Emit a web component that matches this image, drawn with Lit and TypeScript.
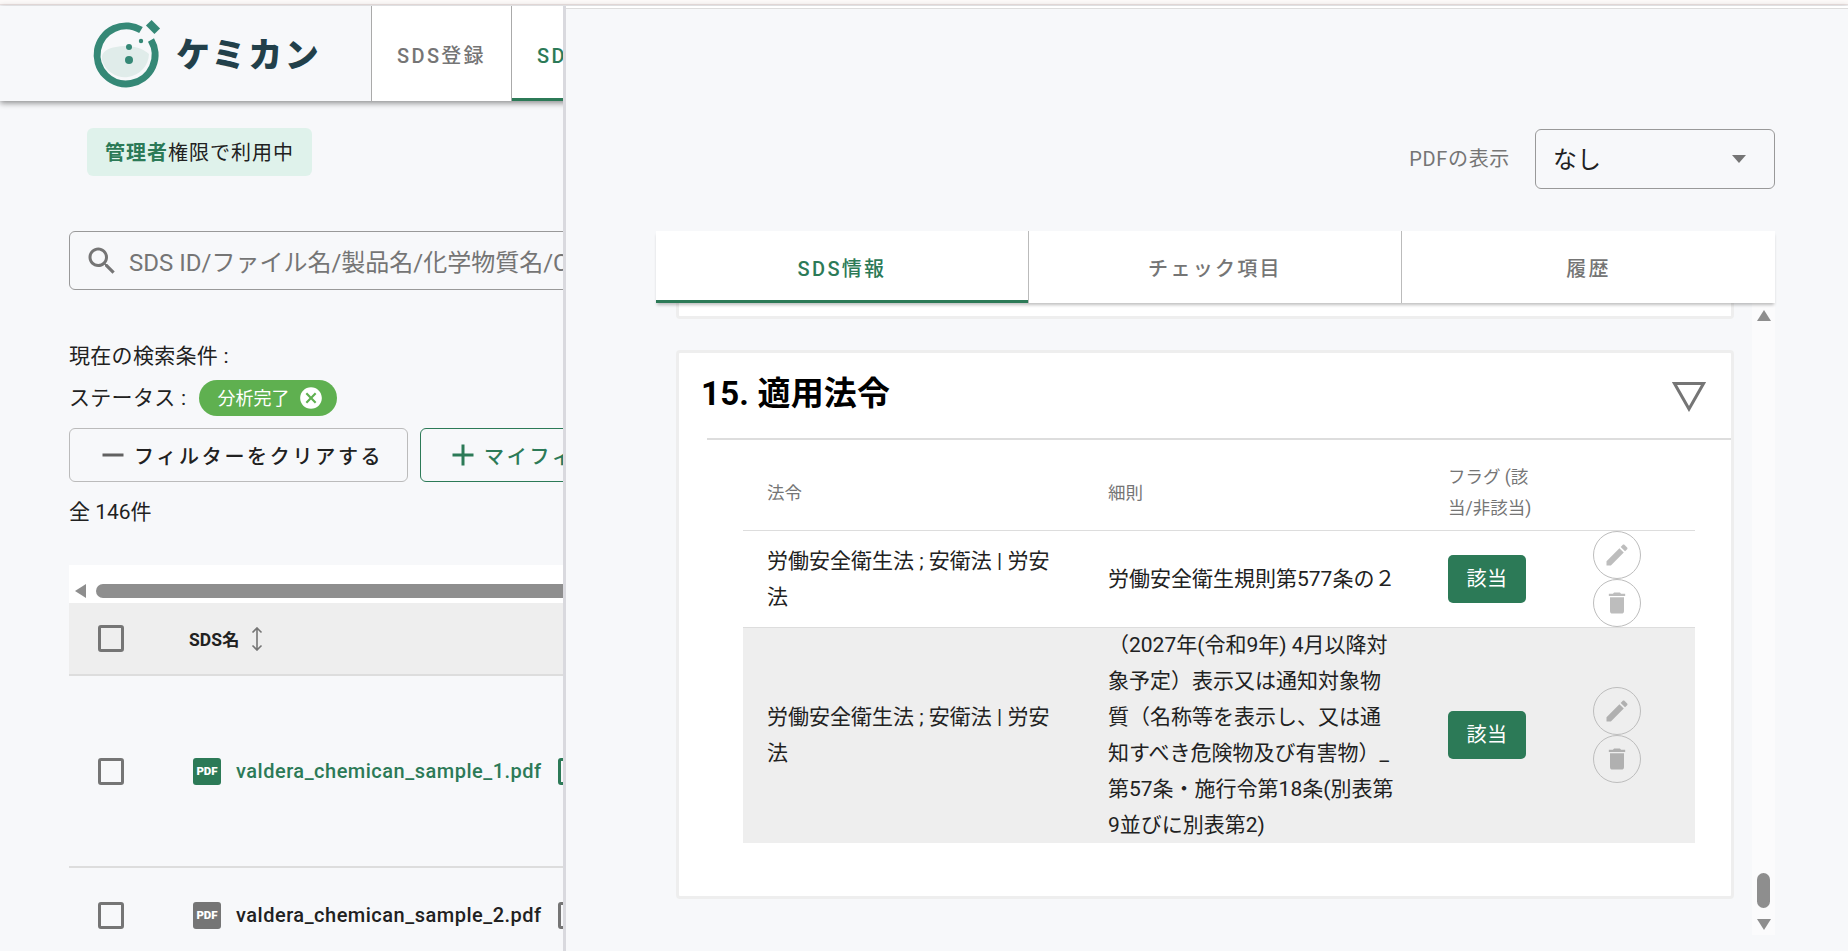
import { LitElement, html, css, svg } from 'lit';
import { customElement } from 'lit/decorators.js';

const icon = (d: string, size: number, cls = '') => html`
  <svg class=${cls} width=${size} height=${size} viewBox="0 0 24 24" fill="currentColor">
    ${svg`<path d=${d}></path>`}
  </svg>
`;

const SEARCH =
  'M15.5 14h-.79l-.28-.27C15.41 12.59 16 11.11 16 9.5 16 5.91 13.09 3 9.5 3S3 5.91 3 9.5 5.91 16 9.5 16c1.61 0 3.09-.59 4.23-1.57l.27.28v.79l5 4.99L20.49 19l-4.99-5zm-6 0C7.01 14 5 11.99 5 9.5S7.01 5 9.5 5 14 7.01 14 9.5 11.99 14 9.5 14z';
const MINUS = 'M19 13H5v-2h14v2z';
const PLUS = 'M19 13h-6v6h-2v-6H5v-2h6V5h2v6h6v2z';
const CANCEL =
  'M12 2C6.47 2 2 6.47 2 12s4.47 10 10 10 10-4.47 10-10S17.53 2 12 2zm5 13.59L15.59 17 12 13.41 8.41 17 7 15.59 10.59 12 7 8.41 8.41 7 12 10.59 15.59 7 17 8.41 13.41 12 17 15.59z';
const EDIT =
  'M3 17.25V21h3.75L17.81 9.94l-3.75-3.75L3 17.25zM20.71 7.04c.39-.39.39-1.02 0-1.41l-2.34-2.34c-.39-.39-1.02-.39-1.41 0l-1.83 1.83 3.75 3.75 1.83-1.83z';
const TRASH = 'M6 19c0 1.1.9 2 2 2h8c1.1 0 2-.9 2-2V7H6v12zM19 4h-3.5l-1-1h-5l-1 1H5v2h14V4z';

@customElement('app-root')
export class AppRoot extends LitElement {
  static styles = css`
    :host {
      display: block;
      width: 1848px;
      height: 951px;
      position: relative;
      overflow: hidden;
      background: #f7f8fa;
      color: #212121;
      font-family: Roboto, 'Noto Sans CJK JP', sans-serif;
      font-size: 20px;
    }

    .topline {
      height: 4px;
      background: #fcf9f8;
      border-bottom: 1px solid #eee4e3;
      margin-bottom: 1px;
    }

    /* header */
    .header {
      height: 95px;
      display: flex;
      box-shadow: 0 2px 6px rgba(0, 0, 0, 0.45);
      position: relative;
    }
    .logo {
      width: 372px;
      box-sizing: border-box;
      display: flex;
      align-items: center;
      padding-left: 88px;
      gap: 8px;
      border-right: 1px solid #aaa;
    }
    .logo-text {
      font-family: 'Noto Sans CJK JP', sans-serif;
      font-weight: 900;
      font-size: 34px;
      letter-spacing: 2.6px;
      color: #22404a;
      line-height: 1;
      margin-bottom: 2px;
    }
    .nav {
      display: flex;
    }
    .nav-item {
      width: 140px;
      box-sizing: border-box;
      display: flex;
      align-items: center;
      justify-content: center;
      background: #fff;
      border-right: 1px solid #aaa;
      color: #757575;
      font-weight: 500;
      letter-spacing: 2.3px;
      font-size: 20px;
      padding-top: 2px;
    }
    .nav-item.active {
      color: #2c7a57;
      box-shadow: inset 0 -3px 0 #2c7a57;
    }

    /* page under the header */
    .main {
      padding-left: 69px;
    }
    .role {
      margin: 27px 0 0 18px;
      width: 225px;
      height: 48px;
      box-sizing: border-box;
      display: flex;
      align-items: center;
      justify-content: center;
      background: #dff2eb;
      border-radius: 6px;
      font-size: 20px;
      letter-spacing: 1px;
      padding-bottom: 2px;
    }
    .role b {
      color: #2c7a57;
      font-weight: 700;
    }
    .search {
      margin-top: 55px;
      width: 800px;
      height: 59px;
      box-sizing: border-box;
      border: 1px solid #999;
      border-radius: 6px;
      display: flex;
      align-items: center;
      padding-left: 14px;
      gap: 9px;
      color: #757575;
      font-size: 24px;
      white-space: nowrap;
    }
    .cond {
      margin-top: 52px;
      line-height: 28px;
      font-size: 21px;
      letter-spacing: 0.3px;
    }
    .status {
      margin-top: 10px;
      height: 36px;
      display: flex;
      align-items: center;
      gap: 13px;
      font-size: 21px;
      letter-spacing: 0.3px;
    }
    .status-label {
      margin-bottom: 4px;
    }
    .chip {
      width: 138px;
      height: 36px;
      box-sizing: border-box;
      display: flex;
      align-items: center;
      padding: 0 0 0 18px;
      gap: 9px;
      border-radius: 18px;
      background: #5fb050;
      color: #fff;
      font-size: 18px;
      letter-spacing: 0;
      white-space: nowrap;
    }
    .chip span {
      margin-bottom: 2px;
    }
    .buttons {
      margin-top: 12px;
      display: flex;
      gap: 12px;
    }
    .btn {
      height: 54px;
      box-sizing: border-box;
      display: flex;
      align-items: center;
      justify-content: flex-start;
      padding-left: 25px;
      gap: 3px;
      border: 1px solid #bbb;
      border-radius: 6px;
      font-size: 20px;
      letter-spacing: 2.7px;
      font-weight: 500;
      white-space: nowrap;
    }
    .btn svg {
      color: #616161;
    }
    .btn.clear {
      width: 339px;
    }
    .btn.add {
      width: 400px;
      padding-left: 24px;
      border-color: #2c7a57;
      color: #2c7a57;
    }
    .btn.add svg {
      color: #2c7a57;
    }
    .total {
      margin-top: 16px;
      line-height: 28px;
      font-size: 21px;
    }

    /* list table */
    .list {
      margin-top: 39px;
      width: 1700px;
    }
    .hscroll {
      height: 38px;
      background: #fff;
      display: flex;
      align-items: flex-end;
      padding: 0 0 5px 6px;
      box-sizing: border-box;
      gap: 10px;
    }
    .hscroll .arrow {
      width: 0;
      height: 0;
      border-style: solid;
      border-width: 7px 11px 7px 0;
      border-color: transparent #8e8e8e transparent transparent;
    }
    .hscroll .thumb {
      flex: 1;
      height: 14px;
      border-radius: 7px;
      background: #8e8e8e;
    }
    .list-head,
    .list-row {
      display: flex;
      align-items: center;
      border-bottom: 2px solid #ddd;
    }
    .list-head {
      height: 73px;
      box-sizing: border-box;
      background: #eee;
    }
    .list-row {
      height: 192px;
      box-sizing: border-box;
    }
    .list-row.short {
      height: 96px;
    }
    .box {
      width: 26px;
      height: 27px;
      box-sizing: border-box;
      margin-left: 29px;
      border: 3px solid #757575;
      border-radius: 3px;
    }
    .sort-name {
      margin-left: 65px;
      font-size: 17.5px;
      font-weight: 700;
      display: flex;
      align-items: center;
      gap: 12px;
      color: #212121;
    }
    .pdf {
      margin-left: 69px;
      width: 28px;
      height: 27px;
      border-radius: 3px;
      background: #2c7a57;
      color: #fff;
      font-size: 11.5px;
      font-weight: 900;
      display: flex;
      align-items: center;
      justify-content: center;
    }
    .pdf.gray {
      background: #757575;
    }
    .fname {
      margin-left: 15px;
      width: 307px;
      font-size: 20px;
      font-weight: 500;
      letter-spacing: 0.5px;
      white-space: nowrap;
    }
    .fname.link {
      color: #2c7a57;
    }
    .tag {
      margin-left: 15px;
      width: 60px;
      height: 27px;
      box-sizing: border-box;
      border: 3px solid #2c7a57;
      border-radius: 3px;
    }
    .tag.gray {
      border-color: #757575;
    }

    /* drawer over the page */
    .panel {
      position: absolute;
      left: 563px;
      right: 0;
      top: 6px;
      bottom: 0;
      box-sizing: border-box;
      background: #f7f8fa;
      border-left: 3px solid #d9d9de;
      display: flex;
      flex-direction: column;
      padding-bottom: 16px;
    }
    .panel-top {
      height: 2px;
      background: #fff;
      border-bottom: 1px solid #ddd;
    }
    .pdf-row {
      margin: 120px 73px 0 0;
      height: 60px;
      display: flex;
      justify-content: flex-end;
      align-items: center;
      gap: 25px;
    }
    .pdf-label {
      color: #757575;
      font-size: 20px;
      letter-spacing: 0.65px;
      margin-bottom: 3px;
    }
    .select {
      width: 240px;
      height: 60px;
      box-sizing: border-box;
      border: 1px solid #999;
      border-radius: 6px;
      display: flex;
      align-items: center;
      justify-content: space-between;
      padding: 0 28px 0 17px;
      font-size: 24px;
    }
    .select span:first-child {
      margin-bottom: 3px;
    }
    .caret {
      width: 0;
      height: 0;
      border-style: solid;
      border-width: 8px 7.5px 0 7.5px;
      border-color: #757575 transparent transparent transparent;
    }
    .drawer-body {
      flex: 1;
      min-height: 0;
      margin: 42px 73px 0 90px;
      display: flex;
      flex-direction: column;
    }
    .tabs {
      height: 72px;
      flex: none;
      display: grid;
      grid-template-columns: 373px 373px 1fr;
      background: #fff;
      box-shadow: 0 3px 3px -1px rgba(0, 0, 0, 0.25);
      position: relative;
      z-index: 1;
    }
    .tab {
      box-sizing: border-box;
      display: flex;
      align-items: center;
      justify-content: center;
      border-right: 1px solid #bbb;
      color: #757575;
      letter-spacing: 2.3px;
      font-size: 20px;
      font-weight: 500;
    }
    .tab:last-child {
      border-right: none;
    }
    .tab.active {
      color: #2c7a57;
      box-shadow: inset 0 -3px 0 #2c7a57;
    }
    .scroller {
      flex: 1;
      min-height: 0;
      display: flex;
      overflow: hidden;
    }
    .content {
      flex: 1;
      padding: 0 18px 0 20px;
      min-width: 0;
    }
    .tail {
      height: 16px;
      box-sizing: border-box;
      background: #fff;
      border: 3px solid #eee;
      border-top: none;
      border-radius: 0 0 4px 4px;
    }
    .card {
      margin-top: 31px;
      height: 549px;
      box-sizing: border-box;
      background: #fff;
      border: 3px solid #eee;
      border-radius: 4px;
    }
    .card-head {
      height: 85px;
      display: flex;
      align-items: center;
      justify-content: space-between;
      padding: 0 25px 0 22px;
    }
    .card-title {
      margin: 0 0 10px;
      font-size: 33px;
      font-weight: 700;
      color: #000;
      letter-spacing: 0.2px;
    }
    .card-head svg {
      margin-top: 2px;
    }
    .card-line {
      margin-left: 28px;
      height: 2px;
      background: #ddd;
    }
    .table {
      margin: 18px 0 0 64px;
      width: 952px;
    }
    .tr {
      display: grid;
      grid-template-columns: 341px 340px 145px 126px;
      align-items: center;
      border-bottom: 1px solid #ddd;
    }
    .tr > div {
      padding: 0 24px;
    }
    .tr.head {
      height: 73px;
      box-sizing: border-box;
      padding-bottom: 2px;
      color: #757575;
      font-size: 17.5px;
      line-height: 31px;
    }
    .tr.body {
      font-size: 21px;
      line-height: 36px;
    }
    .tr.body:last-child {
      background: #eee;
      border-bottom: none;
      height: 215px;
    }
    .tr.body:last-child > div {
      margin-top: -1px;
    }
    .tr > div.flag {
      padding-right: 0;
    }
    .tr.head > div.flag {
      padding-right: 30px;
    }
    .flag-btn {
      width: 78px;
      height: 48px;
      display: flex;
      align-items: center;
      justify-content: center;
      background: #2c7a57;
      color: #fff;
      border-radius: 5px;
      font-size: 20px;
      letter-spacing: 0.5px;
    }
    .actions {
      display: flex;
      flex-direction: column;
    }
    .circle {
      width: 48px;
      height: 48px;
      box-sizing: border-box;
      border: 1px solid #bdbdbd;
      border-radius: 50%;
      display: flex;
      align-items: center;
      justify-content: center;
      color: rgba(0, 0, 0, 0.26);
    }
    .vbar {
      width: 23px;
      flex: none;
      background: #fbfbfc;
      display: flex;
      flex-direction: column;
      align-items: center;
      padding: 7px 0 5px;
      box-sizing: border-box;
    }
    .vbar .up,
    .vbar .down {
      width: 0;
      height: 0;
      border-style: solid;
    }
    .vbar .up {
      border-width: 0 7px 11px 7px;
      border-color: transparent transparent #8e8e8e transparent;
    }
    .vbar .down {
      border-width: 11px 7px 0 7px;
      border-color: #8e8e8e transparent transparent transparent;
    }
    .vbar .thumb {
      margin-top: auto;
      margin-bottom: 11px;
      width: 13px;
      height: 35px;
      border-radius: 7px;
      background: #8e8e8e;
    }
  `;

  private logoMark() {
    return html`
      <svg width="80" height="80" viewBox="88 14 80 80">
        ${svg`
          <path d="M102 60 a24 24 0 0 1 0 -3 c0 -5 6 -9 14 -10 c10 -2 24 -1 33 7 a24 24 0 0 1 -47 6z" fill="#e0ecea"></path>
          <path d="M151 40 A29 29 0 1 1 141 30" fill="none" stroke="#358876" stroke-width="7"></path>
          <rect x="147" y="23" width="12" height="8" transform="rotate(45 153 27)" fill="#358876"></rect>
          <circle cx="129" cy="47" r="3" fill="#358876"></circle>
          <circle cx="129" cy="60" r="4" fill="#358876"></circle>
          <circle cx="141" cy="41" r="2.2" fill="#358876"></circle>
        `}
      </svg>
    `;
  }

  private sortIcon() {
    return html`
      <svg width="12" height="24" viewBox="0 0 12 24" fill="none" stroke="#757575" stroke-width="1.6">
        ${svg`<path d="M6 1v22M1.5 5.5L6 1l4.5 4.5M1.5 18.5L6 23l4.5-4.5"></path>`}
      </svg>
    `;
  }

  private actions() {
    return html`
      <div class="actions">
        <div class="circle">${icon(EDIT, 28)}</div>
        <div class="circle">${icon(TRASH, 28)}</div>
      </div>
    `;
  }

  render() {
    return html`
      <div class="topline"></div>
      <header class="header">
        <div class="logo">${this.logoMark()}<span class="logo-text">ケミカン</span></div>
        <nav class="nav">
          <div class="nav-item">SDS登録</div>
          <div class="nav-item active">SDS一覧</div>
        </nav>
      </header>

      <main class="main">
        <div class="role"><span><b>管理者</b>権限で利用中</span></div>
        <div class="search">${icon(SEARCH, 36)}<span>SDS ID/ファイル名/製品名/化学物質名/CAS番号</span></div>
        <div class="cond">現在の検索条件 :</div>
        <div class="status">
          <span class="status-label">ステータス :</span>
          <div class="chip"><span>分析完了</span>${icon(CANCEL, 26)}</div>
        </div>
        <div class="buttons">
          <div class="btn clear">${icon(MINUS, 36)}フィルターをクリアする</div>
          <div class="btn add">${icon(PLUS, 36)}マイフィルターに保存する</div>
        </div>
        <div class="total">全 146件</div>

        <section class="list">
          <div class="hscroll"><span class="arrow"></span><span class="thumb"></span></div>
          <div class="list-head">
            <span class="box"></span>
            <span class="sort-name">SDS名 ${this.sortIcon()}</span>
          </div>
          <div class="list-row">
            <span class="box"></span>
            <span class="pdf">PDF</span>
            <span class="fname link">valdera_chemican_sample_1.pdf</span>
            <span class="tag"></span>
          </div>
          <div class="list-row short">
            <span class="box"></span>
            <span class="pdf gray">PDF</span>
            <span class="fname">valdera_chemican_sample_2.pdf</span>
            <span class="tag gray"></span>
          </div>
        </section>
      </main>

      <aside class="panel">
        <div class="panel-top"></div>
        <div class="pdf-row">
          <span class="pdf-label">PDFの表示</span>
          <div class="select"><span>なし</span><span class="caret"></span></div>
        </div>
        <div class="drawer-body">
          <div class="tabs">
            <div class="tab active">SDS情報</div>
            <div class="tab">チェック項目</div>
            <div class="tab">履歴</div>
          </div>
          <div class="scroller">
            <div class="content">
              <div class="tail"></div>
              <section class="card">
                <div class="card-head">
                  <h2 class="card-title">15. 適用法令</h2>
                  <svg width="34" height="30" viewBox="0 0 34 30" fill="none" stroke="#757575" stroke-width="3">
                    ${svg`<path d="M2.5 1.5h29L17 27z"></path>`}
                  </svg>
                </div>
                <div class="card-line"></div>
                <div class="table">
                  <div class="tr head">
                    <div>法令</div>
                    <div>細則</div>
                    <div class="flag">フラグ (該当/非該当)</div>
                    <div></div>
                  </div>
                  <div class="tr body">
                    <div>労働安全衛生法 ; 安衛法 | 労安法</div>
                    <div>労働安全衛生規則第577条の２</div>
                    <div class="flag"><span class="flag-btn">該当</span></div>
                    <div>${this.actions()}</div>
                  </div>
                  <div class="tr body">
                    <div>労働安全衛生法 ; 安衛法 | 労安法</div>
                    <div>（2027年(令和9年) 4月以降対象予定）表示又は通知対象物質（名称等を表示し、又は通知すべき危険物及び有害物）_第57条・施行令第18条(別表第9並びに別表第2)</div>
                    <div class="flag"><span class="flag-btn">該当</span></div>
                    <div>${this.actions()}</div>
                  </div>
                </div>
              </section>
            </div>
            <div class="vbar">
              <span class="up"></span>
              <span class="thumb"></span>
              <span class="down"></span>
            </div>
          </div>
        </div>
      </aside>
    `;
  }
}
